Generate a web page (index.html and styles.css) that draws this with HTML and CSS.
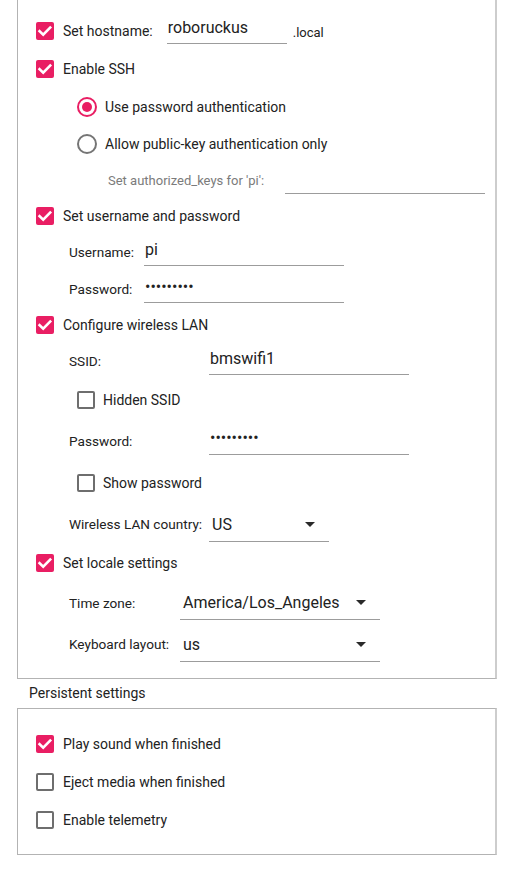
FILE: index.html
```html
<!DOCTYPE html>
<html lang="en">
<head>
<meta charset="utf-8">
<title>Advanced options</title>
<link rel="stylesheet" href="styles.css">
</head>
<body>
<div class="page">
  <section class="box box--main">
    <div class="row h38">
      <span class="cb cb--on"><svg viewBox="0 0 18 18"><path d="M3.6 9.2 7.2 12.6 14.2 5.6"/></svg></span>
      <span class="text">Set hostname:</span>
      <input class="field field--host" type="text" value="roboruckus" readonly>
      <span class="suffix">.local</span>
    </div>
    <div class="row h38">
      <span class="cb cb--on"><svg viewBox="0 0 18 18"><path d="M3.6 9.2 7.2 12.6 14.2 5.6"/></svg></span>
      <span class="text">Enable SSH</span>
    </div>
    <div class="row h37 sub">
      <span class="radio radio--on"></span>
      <span class="text text--radio">Use password authentication</span>
    </div>
    <div class="row h37 sub">
      <span class="radio"></span>
      <span class="text text--radio">Allow public-key authentication only</span>
    </div>
    <div class="row h36 keys">
      <span class="hint">Set authorized_keys for 'pi':</span>
      <input class="field" type="text" value="" readonly>
    </div>
    <div class="row h35">
      <span class="cb cb--on"><svg viewBox="0 0 18 18"><path d="M3.6 9.2 7.2 12.6 14.2 5.6"/></svg></span>
      <span class="text">Set username and password</span>
    </div>
    <div class="row h38 ind">
      <span class="label label--user">Username:</span>
      <input class="field" type="text" value="pi" readonly>
    </div>
    <div class="row h36 ind">
      <span class="label label--user">Password:</span>
      <input class="field" type="password" value="raspberry" readonly>
    </div>
    <div class="row h35">
      <span class="cb cb--on"><svg viewBox="0 0 18 18"><path d="M3.6 9.2 7.2 12.6 14.2 5.6"/></svg></span>
      <span class="text">Configure wireless LAN</span>
    </div>
    <div class="row h38 ind">
      <span class="label label--wifi">SSID:</span>
      <input class="field" type="text" value="bmswifi1" readonly>
    </div>
    <div class="row h40 sub">
      <span class="cb"></span>
      <span class="text text--sub">Hidden SSID</span>
    </div>
    <div class="row h41 ind">
      <span class="label label--wifi">Password:</span>
      <input class="field" type="password" value="bmswifi12" readonly>
    </div>
    <div class="row h43 sub">
      <span class="cb"></span>
      <span class="text text--sub">Show password</span>
    </div>
    <div class="row h40 ind">
      <span class="label label--wifi">Wireless LAN country:</span>
      <div class="combo combo--short"><span>US</span><span class="arrow"></span></div>
    </div>
    <div class="row h38">
      <span class="cb cb--on"><svg viewBox="0 0 18 18"><path d="M3.6 9.2 7.2 12.6 14.2 5.6"/></svg></span>
      <span class="text">Set locale settings</span>
    </div>
    <div class="row h41 ind">
      <span class="label label--locale">Time zone:</span>
      <div class="combo"><span>America/Los_Angeles</span><span class="arrow"></span></div>
    </div>
    <div class="row h42 ind">
      <span class="label label--locale">Keyboard layout:</span>
      <div class="combo"><span>us</span><span class="arrow"></span></div>
    </div>
  </section>

  <div class="section-title">Persistent settings</div>

  <section class="box box--persist">
    <div class="row h38">
      <span class="cb cb--on"><svg viewBox="0 0 18 18"><path d="M3.6 9.2 7.2 12.6 14.2 5.6"/></svg></span>
      <span class="text">Play sound when finished</span>
    </div>
    <div class="row h38">
      <span class="cb"></span>
      <span class="text">Eject media when finished</span>
    </div>
    <div class="row h38">
      <span class="cb"></span>
      <span class="text">Enable telemetry</span>
    </div>
  </section>
</div>
</body>
</html>
```

FILE: styles.css
```css
* { box-sizing: border-box; }

html, body {
  margin: 0;
  background: #ffffff;
}

body {
  font-family: Roboto, "Noto Sans", "Liberation Sans", sans-serif;
  color: #222222;
  width: 515px;
  overflow: hidden;
}

.page {
  padding: 0 18px 0 17px;
}

.box {
  border: 1px solid #b3b3b3;
  border-right: 2px solid #cdcdcd;
  padding-left: 18px;
  background: #ffffff;
}

.box--main {
  margin-top: -1px;
  padding-top: 12px;
  padding-bottom: 13px;
}

.box--persist {
  padding-top: 16px;
  padding-bottom: 15px;
}

.section-title {
  height: 29px;
  line-height: 29px;
  padding-left: 12px;
  font-size: 14px;
  color: #222222;
}

.row {
  display: flex;
  align-items: center;
}

.h35 { height: 35px; }
.h36 { height: 36px; }
.h37 { height: 37px; }
.h38 { height: 38px; }
.h40 { height: 40px; }
.h41 { height: 41px; }
.h42 { height: 42px; }
.h43 { height: 43px; }

.sub { padding-left: 41px; }
.ind { padding-left: 33px; }
.keys { padding-left: 72px; }

.cb {
  flex: none;
  width: 18px;
  height: 18px;
  border: 2px solid #6e6e6e;
  border-radius: 2px;
  background: #ffffff;
  display: flex;
  align-items: center;
  justify-content: center;
}

.cb--on {
  border: none;
  background: #e91e63;
}

.cb svg {
  width: 18px;
  height: 18px;
  display: block;
}

.cb svg path {
  fill: none;
  stroke: #ffffff;
  stroke-width: 2.6;
  stroke-linecap: square;
  stroke-linejoin: miter;
}

.radio {
  flex: none;
  width: 20px;
  height: 20px;
  border: 2px solid #757575;
  border-radius: 50%;
  display: flex;
  align-items: center;
  justify-content: center;
}

.radio--on {
  border-color: #e91e63;
}

.radio--on::after {
  content: "";
  width: 10px;
  height: 10px;
  border-radius: 50%;
  background: #e91e63;
}

.text {
  font-size: 14px;
  margin-left: 9px;
  white-space: nowrap;
}

.text--radio { margin-left: 8px; }
.text--sub { margin-left: 8px; }

.hint {
  font-size: 13px;
  color: #7b7b7b;
  width: 177px;
  white-space: nowrap;
}

.label {
  flex: none;
  font-size: 13.6px;
  white-space: nowrap;
}

.label--user { width: 75px; }
.label--wifi { width: 140px; }
.label--locale { width: 111px; }

.field {
  flex: none;
  width: 200px;
  height: 28px;
  margin: 0;
  padding: 0 1px 5px;
  border: 0;
  border-bottom: 1px solid #9c9c9c;
  border-radius: 0;
  background: transparent;
  font-family: Roboto, "Noto Sans", "Liberation Sans", sans-serif;
  font-size: 16px;
  color: #222222;
  outline: none;
}

.field--host {
  width: 120px;
  margin-left: 14px;
  align-self: flex-start;
  margin-top: 1px;
  height: 31px;
  padding-bottom: 2px;
}

.suffix {
  font-size: 13px;
  margin-left: 6px;
  margin-top: 2px;
}

.combo {
  flex: none;
  width: 200px;
  height: 34px;
  margin-top: 1px;
  border-bottom: 1px solid #9c9c9c;
  display: flex;
  align-items: center;
  justify-content: space-between;
  padding: 0 14px 0 3px;
  font-size: 16px;
}

.combo--short {
  width: 120px;
  margin-top: 2px;
}

.arrow {
  width: 0;
  height: 0;
  border-left: 5.5px solid transparent;
  border-right: 5.5px solid transparent;
  border-top: 5px solid #2a2a2a;
}
```
